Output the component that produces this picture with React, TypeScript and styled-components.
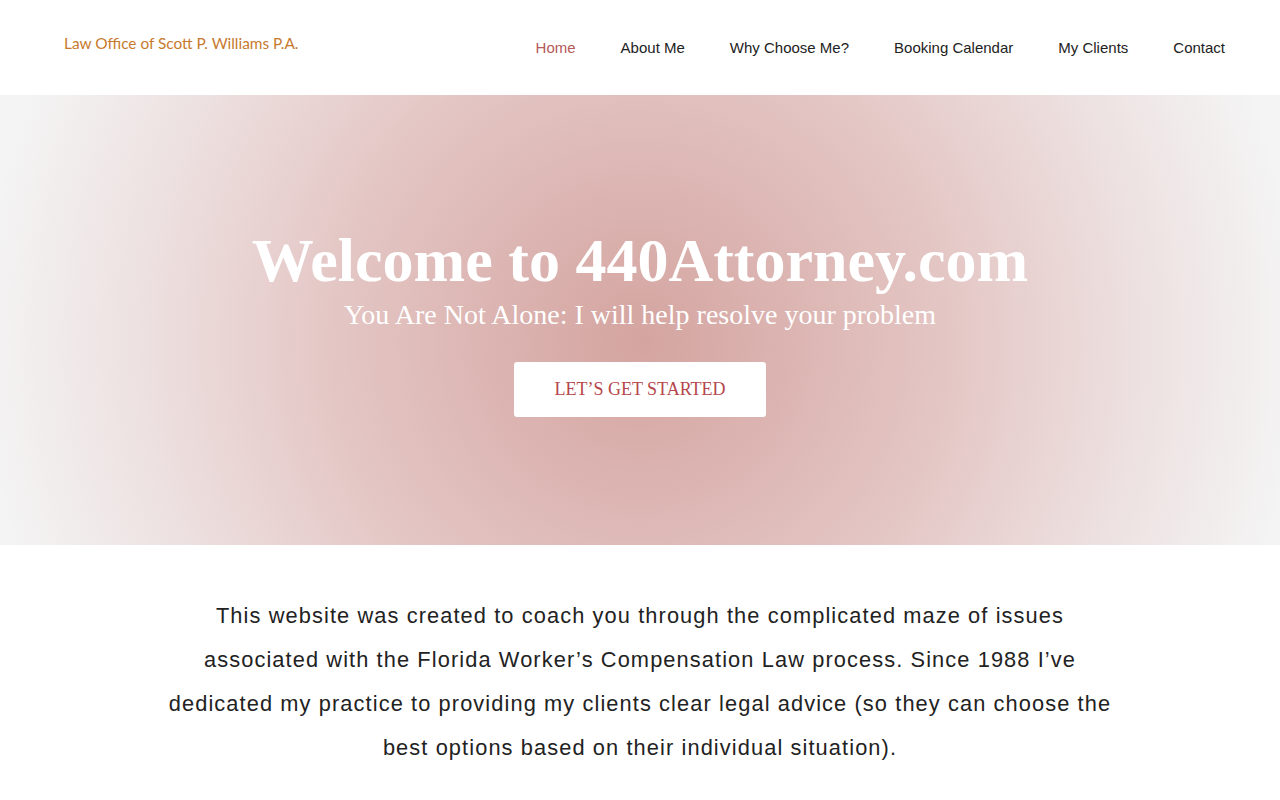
import { FC } from 'react';
import styled, { createGlobalStyle } from 'styled-components';

const GlobalStyle = createGlobalStyle`
  html, body {
    margin: 0;
    padding: 0;
    background: #fff;
  }
  * {
    box-sizing: border-box;
  }
`;

const NAV_ITEMS = [
  'Home',
  'About Me',
  'Why Choose Me?',
  'Booking Calendar',
  'My Clients',
  'Contact'
];

const App: FC = () => {
  return (
    <>
      <GlobalStyle />
      <Header>
        <Logo>Law Office of Scott P. Williams P.A.</Logo>
        <Nav>
          {NAV_ITEMS.map((item, i) => (
            <NavLink key={item} href="#" $active={i === 0}>
              {item}
            </NavLink>
          ))}
        </Nav>
      </Header>

      <Hero>
        <HeroTitle>Welcome to 440Attorney.com</HeroTitle>
        <HeroSubtitle>You Are Not Alone: I will help resolve your problem</HeroSubtitle>
        <StartButton href="#">LET’S GET STARTED</StartButton>
      </Hero>

      <Intro>
        <IntroText>
          This website was created to coach you through the complicated maze of issues
          associated with the Florida Worker’s Compensation Law process. Since 1988 I’ve
          dedicated my practice to providing my clients clear legal advice (so they can
          choose the best options based on their individual situation).
        </IntroText>
      </Intro>
    </>
  );
};

const Header = styled.header`
  height: 95px;
  display: flex;
  align-items: flex-start;
  justify-content: space-between;
  padding: 0 55px 0 64px;
`;

const Logo = styled.div`
  margin-top: 34px;
  font-family: Lato, 'Open Sans', sans-serif;
  font-size: 15.4px;
  color: #c77a2e;
`;

const Nav = styled.nav`
  display: flex;
  gap: 45px;
  margin-top: 38px;
`;

const NavLink = styled.a<{ $active?: boolean }>`
  font-family: 'Liberation Sans', Arial, sans-serif;
  font-size: 15px;
  line-height: 20px;
  text-decoration: none;
  color: ${(p) => (p.$active ? '#b5595a' : '#222')};
`;

const Hero = styled.section`
  height: 450px;
  display: flex;
  flex-direction: column;
  align-items: center;
  padding-top: 128px;
  background: radial-gradient(circle 660px at 50% 55%, #d4a4a0 0%, #e3c5c3 45%, #ede0e0 75%, #f4f4f4 100%);
`;

const HeroTitle = styled.h1`
  margin: 0;
  font-family: 'Liberation Serif', 'Times New Roman', serif;
  font-weight: bold;
  font-size: 62px;
  line-height: 74px;
  color: #fff;
`;

const HeroSubtitle = styled.p`
  margin: 1px 0 0;
  font-family: 'Liberation Serif', 'Times New Roman', serif;
  font-size: 28px;
  line-height: 34px;
  color: #fff;
`;

const StartButton = styled.a`
  margin-top: 30px;
  width: 252px;
  height: 55px;
  display: flex;
  align-items: center;
  justify-content: center;
  background: #fff;
  border-radius: 3px;
  font-family: 'Liberation Serif', 'Times New Roman', serif;
  font-size: 18px;
  color: #b5474c;
  text-decoration: none;
`;

const Intro = styled.section`
  display: flex;
  justify-content: center;
  padding: 49px 0 0;
`;

const IntroText = styled.p`
  margin: 0;
  width: 956px;
  text-align: center;
  font-family: 'Liberation Sans', Arial, sans-serif;
  font-size: 21.8px;
  line-height: 44px;
  letter-spacing: 1.1px;
  color: #222;
`;

export default App;
